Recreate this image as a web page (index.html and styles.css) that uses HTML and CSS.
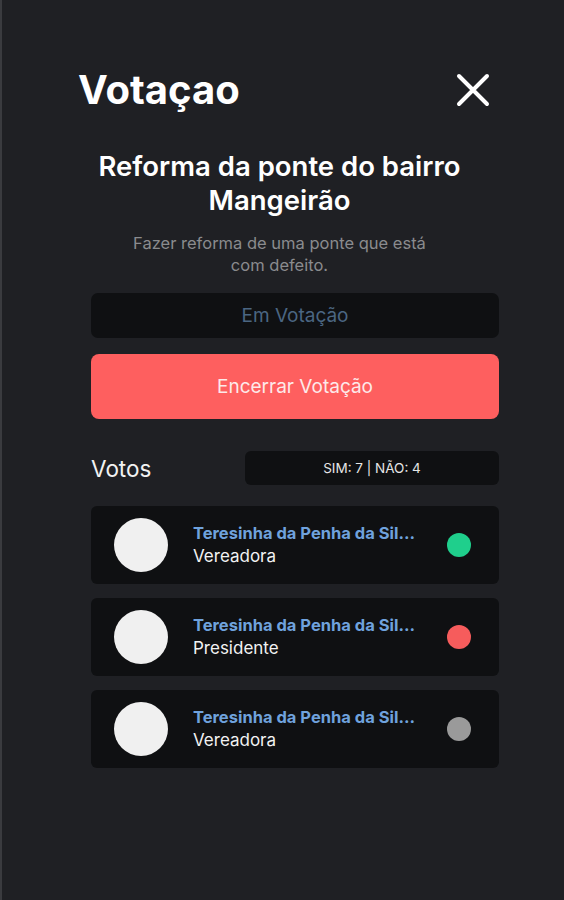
FILE: index.html
```html
<!DOCTYPE html>
<html lang="pt-BR">
<head>
    <meta charset="UTF-8">
    <meta name="viewport" content="width=device-width, initial-scale=1.0">
    <title>Votação</title>
    <link rel="stylesheet" href="styles.css">
</head>
<body>

<div class="screen">
    <header class="top">
        <h1>Votaçao</h1>
        <button class="close" aria-label="Fechar">
            <svg width="34" height="34" viewBox="0 0 34 34">
                <path d="M3 3 L31 31 M31 3 L3 31" stroke="#fff" stroke-width="4" stroke-linecap="round" fill="none"/>
            </svg>
        </button>
    </header>

    <section class="intro">
        <h2>Reforma da ponte do bairro Mangeirão</h2>
        <p>Fazer reforma de uma ponte que está com defeito.</p>
    </section>

    <main class="content">
        <div class="status">Em Votação</div>
        <button class="end-btn">Encerrar Votação</button>

        <div class="votes-head">
            <span class="votes-title">Votos</span>
            <div class="count">SIM: 7 | NÃO: 4</div>
        </div>

        <ul class="voters">
            <li class="voter">
                <div class="avatar"></div>
                <div class="info">
                    <span class="name">Teresinha da Penha da Silva Santos</span>
                    <span class="role">Vereadora</span>
                </div>
                <span class="dot yes"></span>
            </li>
            <li class="voter">
                <div class="avatar"></div>
                <div class="info">
                    <span class="name">Teresinha da Penha da Silva Santos</span>
                    <span class="role">Presidente</span>
                </div>
                <span class="dot no"></span>
            </li>
            <li class="voter">
                <div class="avatar"></div>
                <div class="info">
                    <span class="name">Teresinha da Penha da Silva Santos</span>
                    <span class="role">Vereadora</span>
                </div>
                <span class="dot none"></span>
            </li>
        </ul>
    </main>
</div>

</body>
</html>
```

FILE: styles.css
```css
html, body {
    margin: 0;
    padding: 0;
    height: 100%;
}
body {
    font-family: Inter, "Noto Sans", sans-serif;
    background: #1f2024;
    color: #fff;
}
.screen {
    min-height: 100%;
    border-left: 2px solid #3a3b3f;
    box-sizing: border-box;
    padding: 62px 65px 0 76px;
}
.top {
    display: flex;
    justify-content: space-between;
    align-items: center;
    margin-right: 9px;
}
.top h1 {
    margin: 0;
    font-size: 40px;
    font-weight: 700;
    line-height: 56px;
}
.close {
    background: none;
    border: none;
    padding: 0;
    width: 34px;
    height: 34px;
    cursor: pointer;
}
.intro {
    text-align: center;
    padding-right: 18px;
    margin-top: 31px;
}
.intro h2 {
    margin: 0 auto;
    max-width: 390px;
    font-size: 27.5px;
    font-weight: 600;
    line-height: 34px;
}
.intro p {
    margin: 15px auto 0;
    max-width: 310px;
    font-size: 16.5px;
    line-height: 22px;
    color: #8a8b8e;
}
.content {
    margin-left: 13px;
    margin-top: 17px;
}
.status {
    background: #0f1012;
    border-radius: 7px;
    height: 45px;
    line-height: 45px;
    text-align: center;
    color: #4b6682;
    font-size: 19px;
}
.end-btn {
    display: block;
    width: 100%;
    margin-top: 16px;
    height: 65px;
    border: none;
    border-radius: 8px;
    background: #fe5f5f;
    color: #fde9e9;
    font-family: inherit;
    font-size: 19px;
    cursor: pointer;
}
.votes-head {
    display: flex;
    justify-content: space-between;
    align-items: center;
    margin-top: 32px;
}
.votes-title {
    font-size: 22.5px;
    color: #f2f2f2;
}
.count {
    width: 254px;
    height: 34px;
    line-height: 34px;
    background: #0f1012;
    border-radius: 6px;
    text-align: center;
    font-size: 13.5px;
    color: #e6e6e6;
}
.voters {
    list-style: none;
    margin: 21px 0 0;
    padding: 0;
    display: flex;
    flex-direction: column;
    gap: 14px;
}
.voter {
    display: flex;
    align-items: center;
    height: 78px;
    background: #0f1012;
    border-radius: 6px;
    padding: 0 28px 0 23px;
}
.avatar {
    width: 54px;
    height: 54px;
    border-radius: 50%;
    background: #f0f0f0;
    flex: none;
}
.info {
    flex: 1;
    min-width: 0;
    margin-left: 25px;
    margin-right: 26px;
    display: flex;
    flex-direction: column;
}
.name {
    font-size: 16.5px;
    font-weight: 700;
    color: #6fa2dd;
    white-space: nowrap;
    overflow: hidden;
    text-overflow: ellipsis;
    line-height: 22px;
}
.role {
    font-size: 17px;
    color: #f2f2f2;
    line-height: 24px;
}
.dot {
    width: 24px;
    height: 24px;
    border-radius: 50%;
    flex: none;
}
.dot.yes { background: #1fcf8c; }
.dot.no { background: #f65c5c; }
.dot.none { background: #9a9a9a; }
```
